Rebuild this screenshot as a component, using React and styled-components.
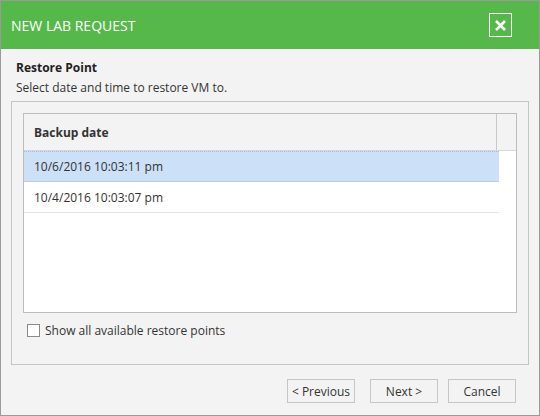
import React, { useState } from "react";
import styled, { createGlobalStyle } from "styled-components";

const Global = createGlobalStyle`
  html, body { margin: 0; padding: 0; }
  body { font-family: "Open Sans", "Noto Sans", sans-serif; }
`;

const Dialog = styled.div`
  width: 540px;
  height: 416px;
  box-sizing: border-box;
  border: 1px solid #9a9a9a;
  background: #f3f3f3;
  display: flex;
  flex-direction: column;
`;

const Header = styled.div`
  height: 48px;
  background: #56b84b;
  display: flex;
  align-items: center;
  justify-content: space-between;
  padding: 0 27px 0 10px;
  color: #fff;
  font-size: 14px;
`;

const CloseButton = styled.button`
  width: 23px;
  height: 24px;
  border: 1px solid #fff;
  background: transparent;
  padding: 0;
  display: flex;
  align-items: center;
  justify-content: center;
  cursor: pointer;
`;

const Body = styled.div`
  flex: 1;
  padding: 10px 10px 0 10px;
  display: flex;
  flex-direction: column;
`;

const Title = styled.div`
  font-weight: 700;
  font-size: 12px;
  color: #222;
  padding-left: 5px;
  line-height: 18px;
`;

const Subtitle = styled.div`
  font-size: 12px;
  color: #333;
  padding-left: 5px;
  line-height: 18px;
  margin-top: 2px;
`;

const Panel = styled.div`
  margin-top: 4px;
  height: 264px;
  box-sizing: border-box;
  border: 1px solid #c4c4c4;
  padding: 11px 11px 0 11px;
`;

const Table = styled.div`
  height: 200px;
  box-sizing: border-box;
  border: 1px solid #bdbdbd;
  background: #fff;
  display: flex;
  flex-direction: column;
`;

const HeadRow = styled.div`
  height: 36px;
  display: grid;
  grid-template-columns: 1fr 19px;
  background: #f3f3f3;
  border-bottom: 1px solid #d8d8d8;
`;

const HeadCell = styled.div`
  display: flex;
  align-items: center;
  padding-left: 10px;
  font-weight: 700;
  font-size: 12px;
  color: #333;
  border-right: 1px solid #c8c8c8;
`;

const Row = styled.div`
  height: 31px;
  width: 475px;
  display: flex;
  align-items: center;
  padding-left: 10px;
  box-sizing: border-box;
  font-size: 12px;
  color: #333;
  background: ${(p) => (p.selected ? "#cce0f7" : "#fff")};
  border-bottom: 1px solid ${(p) => (p.selected ? "#b9cfe8" : "#e4e4e4")};
  border-top: ${(p) => (p.selected ? "1px dotted #9fbbe0" : "none")};
`;

const CheckLabel = styled.label`
  display: flex;
  align-items: center;
  gap: 5px;
  margin-top: 9px;
  padding-left: 4px;
  font-size: 12px;
  color: #333;
`;

const Box = styled.span`
  width: 11px;
  height: 11px;
  border: 1px solid #8a8a8a;
  background: #fff;
`;

const Footer = styled.div`
  display: flex;
  justify-content: flex-end;
  gap: 0;
  padding: 14px 13px 0 0;
`;

const Button = styled.button`
  width: 68px;
  height: 24px;
  margin-left: ${(p) => p.gap || 0}px;
  border: 1px solid #c6c6c6;
  background: #f3f3f3;
  font-family: inherit;
  font-size: 12px;
  color: #333;
  padding: 0;
`;

export default function App() {
  const [selected, setSelected] = useState(0);
  const rows = ["10/6/2016 10:03:11 pm", "10/4/2016 10:03:07 pm"];
  return (
    <>
      <Global />
      <Dialog>
        <Header>
          <span>NEW LAB REQUEST</span>
          <CloseButton>
            <svg width="13" height="13" viewBox="0 0 13 13">
              <path d="M2 2 L11 11 M11 2 L2 11" stroke="#fff" strokeWidth="2.6" />
            </svg>
          </CloseButton>
        </Header>
        <Body>
          <Title>Restore Point</Title>
          <Subtitle>Select date and time to restore VM to.</Subtitle>
          <Panel>
            <Table>
              <HeadRow>
                <HeadCell>Backup date</HeadCell>
                <div />
              </HeadRow>
              {rows.map((r, i) => (
                <Row key={r} selected={i === selected} onClick={() => setSelected(i)}>
                  {r}
                </Row>
              ))}
            </Table>
            <CheckLabel>
              <Box />
              Show all available restore points
            </CheckLabel>
          </Panel>
          <Footer>
            <Button>&lt; Previous</Button>
            <Button gap={15}>Next &gt;</Button>
            <Button gap={10}>Cancel</Button>
          </Footer>
        </Body>
      </Dialog>
    </>
  );
}
